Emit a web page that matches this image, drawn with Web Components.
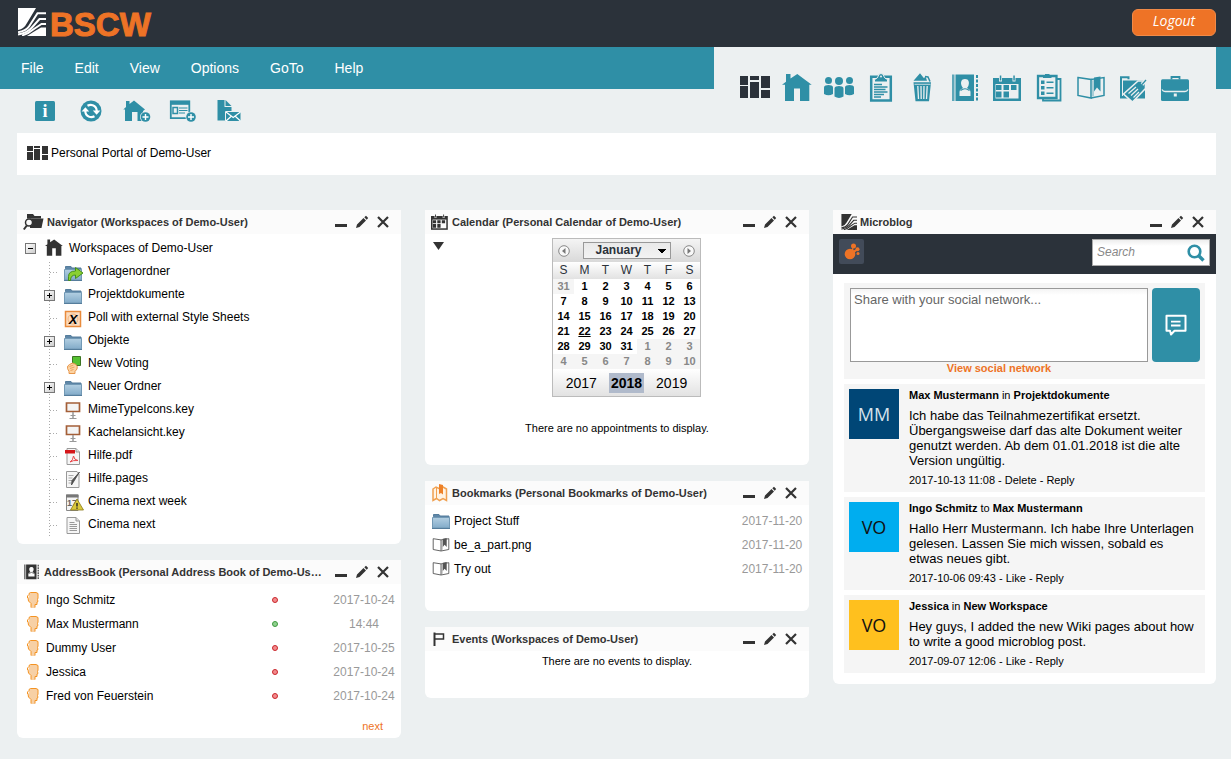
<!DOCTYPE html>
<html lang="en">
<head>
<meta charset="utf-8">
<meta name="viewport" content="width=device-width, initial-scale=1">
<title>BSCW - Personal Portal of Demo-User</title>
<style>
    :root{
        --dark: #2b323a;
        --teal: #2f8fa6;
        --orange: #ee7326;
        --page: #ecf0f1;
        --muted: #999999;
        --ink: #333333;
    }

    body{
        margin: 0;
        background: var(--page);
        color: #000000;
        font-family: "Liberation Sans", Arial, sans-serif;
        font-size: 12px;
        line-height: 15px;
    }
</style>
</head>
<body>

<app-header></app-header>
<main-nav></main-nav>
<path-bar>Personal Portal of Demo-User</path-bar>

<portal-grid>
    <portal-column>
        <portal-panel icon="navigator" heading="Navigator (Workspaces of Demo-User)">
            <nav-tree label="Workspaces of Demo-User">
                <tree-item icon="sharedfolder">Vorlagenordner</tree-item>
                <tree-item icon="folder" expandable>Projektdokumente</tree-item>
                <tree-item icon="poll">Poll with external Style Sheets</tree-item>
                <tree-item icon="folder" expandable>Objekte</tree-item>
                <tree-item icon="voting">New Voting</tree-item>
                <tree-item icon="folder" expandable>Neuer Ordner</tree-item>
                <tree-item icon="keynote">MimeTypeIcons.key</tree-item>
                <tree-item icon="keynote">Kachelansicht.key</tree-item>
                <tree-item icon="pdf">Hilfe.pdf</tree-item>
                <tree-item icon="pages">Hilfe.pages</tree-item>
                <tree-item icon="eventwarn">Cinema next week</tree-item>
                <tree-item icon="document">Cinema next</tree-item>
            </nav-tree>
        </portal-panel>
        <portal-panel icon="addressbook" heading="AddressBook (Personal Address Book of Demo-Us…">
            <contact-list></contact-list>
        </portal-panel>
    </portal-column>

    <portal-column>
        <portal-panel icon="calendarsmall" heading="Calendar (Personal Calendar of Demo-User)">
            <month-calendar></month-calendar>
            <empty-note class="appointments">There are no appointments to display.</empty-note>
        </portal-panel>
        <portal-panel icon="bookmarks" heading="Bookmarks (Personal Bookmarks of Demo-User)">
            <bookmark-list></bookmark-list>
        </portal-panel>
        <portal-panel icon="flag" heading="Events (Workspaces of Demo-User)">
            <empty-note class="events">There are no events to display.</empty-note>
        </portal-panel>
    </portal-column>

    <portal-column>
        <portal-panel icon="marksmall" heading="Microblog">
            <micro-blog>
                <blog-post initials="MM" color="#004676" ink="#d5e2ec" author="Max Mustermann" relation="in" target="Projektdokumente" date="2017-10-13 11:08" action="Delete">Ich habe das Teilnahmezertifikat ersetzt. Übergangsweise darf das alte Dokument weiter genutzt werden. Ab dem 01.01.2018 ist die alte Version ungültig.</blog-post>
                <blog-post initials="VO" color="#00adef" ink="#111111" author="Ingo Schmitz" relation="to" target="Max Mustermann" date="2017-10-06 09:43" action="Like">Hallo Herr Mustermann. Ich habe Ihre Unterlagen gelesen. Lassen Sie mich wissen, sobald es etwas neues gibt.</blog-post>
                <blog-post initials="VO" color="#ffc01e" ink="#111111" author="Jessica" relation="in" target="New Workspace" date="2017-09-07 12:06" action="Like">Hey guys, I added the new Wiki pages about how to write a good microblog post.</blog-post>
            </micro-blog>
        </portal-panel>
    </portal-column>
</portal-grid>

<script>
// ---------- icons: name -> [width, height, viewBox, svg content] ----------
const mark = `
    <path fill="currentColor" d="M0 0H18L9 15Q6 21 0 22z"/>
    <path fill="none" stroke="currentColor" stroke-width="2" d="M28 5.200H19.500L11 18.500Q8 23 0 24.300"/>
    <path fill="none" stroke="currentColor" stroke-width="2" d="M28 11H21.500L13.500 20Q9 25 0 26.600"/>
    <path fill="none" stroke="currentColor" stroke-width="1.800" d="M28 16H23.500L16 21Q10 26 4 27.500"/>
    <path fill="currentColor" d="M28 19.500H23L17 23 9 28H28z"/>`;

const plusBadge = (x, y) => `
    <circle cx="${x}" cy="${y}" r="5.5" fill="#ecf0f1"/>
    <circle cx="${x}" cy="${y}" r="4.8" fill="currentColor"/>
    <path d="M${x - 3} ${y}h6M${x} ${y - 3}v6" stroke="#fff" stroke-width="1.4"/>`;

const folder = `
    <defs><linearGradient id="f" x2="0" y2="1"><stop stop-color="#b3cfe2"/><stop offset="1" stop-color="#82abc9"/></linearGradient></defs>
    <path d="M1.500 3.500V1.500h5.500l1 1.500h9v2H1.500z" fill="#5f87a8" stroke="#557d9c"/>
    <path d="M.5 4.500h17v10.500H.5z" fill="url(#f)" stroke="#7299b5"/>
    <path d="M0 15.500h18" stroke="#557d9c"/>`;

const sheet = `
    <path d="M3 .5h9L15.500 4v12.500H3z" fill="#f6f6f6" stroke="#999"/>
    <path d="M12 .5V4h3.500" fill="#ddd" stroke="#999"/>`;

const calendarIcon = `
    <path d="M1 5h28v23H1z" fill="currentColor"/>
    <path d="M3.500 11h23v14.500h-23z" fill="var(--hole, #ecf0f1)"/>
    <path d="M7 3v5.500h3V3zM20.500 3v5.500h3V3z" fill="var(--hole, #ecf0f1)"/>
    <path d="M7.800 2.500h1.500v5H7.800zM21.300 2.500h1.500v5h-1.500z" fill="currentColor"/>
    <path d="M4 12h5.500v5H4zM11.500 12H17v5h-5.500zM19 12h5.500v5H19zM4 18.500h5.500v6H4zM11.500 18.500H17v6h-5.500z" fill="currentColor"/>`;

const bookIcon = `
    <path d="M2 4.500l13 2V25L2 22.500z" fill="none" stroke="currentColor" stroke-width="1.500"/>
    <path d="M15 6.500l13-2v18L15 25" fill="none" stroke="currentColor" stroke-width="1.500"/>
    <path d="M16 7.500l2-.5v16l-2 .5z" fill="currentColor" opacity=".35"/>
    <path d="M18 4.500l6.500-1v15l-3.500-4-3 4z" fill="currentColor"/>`;

const addressIcon = `
    <path d="M2 1.500h2.500V28H2z" fill="currentColor" opacity=".75"/>
    <path d="M5.500 1.500H24V28H5.500zM26 2h2v3h-2zM26 6.500h2v3h-2zM26 11h2v3h-2zM26 15.500h2v3h-2zM26 20h2v3h-2zM26 24.500h2v3h-2z" fill="currentColor"/>
    <path d="M15 6c-4 0-4.500 3.500-3.500 6.500.5 1.500 1.500 2.500 1.500 2.500-1.500 1-3.500 1.500-3.500 4v4h11v-4c0-2.500-2-3-3.500-4 0 0 1-1 1.500-2.500C19.500 9.500 19 6 15 6z" fill="var(--hole, #ecf0f1)"/>
    <path d="M10.500 17.500q4.500-3.500 9 0" fill="none" stroke="currentColor" stroke-width="1.200"/>`;

const housePath = `<path fill="currentColor" d="M4 1h4.500v4.500L15.300 1l14.400 10.700h-2.400V28H18V15.500h-6V28H3V11.700H0l4-3z"/>`;

const ICONS = {
    mark: [28, 28, "0 0 28 28", mark],
    marksmall: [18, 16, "-4 0 31 28", mark],
    portal: [30, 30, "0 0 30 30", `<path fill="currentColor" d="M0 3h8v9H0zM0 13h8v12H0zM10 3h9v4h-9zM10 9h9v16h-9zM21 3h9v12h-9zM21 17h9v8h-9z"/>`],
    portalsmall: [22, 22, "0 0 22 22", `<path fill="currentColor" d="M0 4h6v5H0zM0 10h6v8H0zM7 4h6v2H7zM7 7h6v11H7zM15 4h6v8h-6zM15 13h6v5h-6z"/>`],
    house: [30, 30, "0 0 30 30", housePath],
    housesmall: [18, 18, "0 0 30 30", housePath],
    people: [30, 30, "0 0 30 30", `<g fill="currentColor">
        <circle cx="4.500" cy="7.500" r="3.500"/><circle cx="25.500" cy="7.500" r="3.500"/><circle cx="15" cy="8" r="4"/>
        <path d="M1.500 12.500q3-.8 6 0 1.500.5 1.500 2V21q-4.500 2.500-9 0v-6.500q0-1.500 1.500-2zM22.500 12.500q3-.8 6 0 1.500.5 1.500 2V21q-4.500 2.500-9 0v-6.500q0-1.500 1.500-2zM12 13.500q3-.8 6 0 1.500.5 1.500 2v8q-4.500 2.800-9 0v-8q0-1.500 1.500-2z"/></g>`],
    clipboard: [30, 30, "0 0 30 30", `<path d="M5.200 3.800h19.600v23.700H5.200z" fill="none" stroke="currentColor" stroke-width="2.500"/>
        <path d="M8.500 9V6.500q3-1 3.500-3 .5-3 3-3t3 3q.5 2 3.500 3V9z" fill="currentColor" stroke="#ecf0f1"/>
        <circle cx="15" cy="3.500" r="1" fill="#ecf0f1"/>
        <path d="M8 11.500h8M8 14h13.500M8 16.500h11.500M8 19h13.500M8 21.500h10M8 24h7" stroke="currentColor" stroke-width="1.500"/>`],
    trash: [30, 30, "0 0 30 30", `<path fill="currentColor" d="M5.500 7.800L12 .3l4 5 1.500-2L19 7.800zM5.500 9.300H23l-2 19H7.500z"/>
        <path d="M17 3.500l3 .5 2 4.500" fill="none" stroke="currentColor" stroke-width="1.500"/>
        <path d="M6.500 11.300h16" stroke="#ecf0f1" stroke-width=".8"/>
        <path d="M9.800 13l.7 13M13 13l.2 13M16 13l-.2 13M19.200 13l-.7 13" stroke="#ecf0f1" stroke-width="1.300"/>`],
    addresses: [30, 30, "0 0 30 30", addressIcon],
    calendar: [30, 30, "0 0 30 30", calendarIcon],
    tasks: [30, 30, "0 0 30 30", `<path d="M23 6h3.500v21.500H9V26" fill="none" stroke="currentColor" stroke-width="1.800"/>
        <path d="M4 3h18.500v22H4z" fill="#ecf0f1" stroke="currentColor" stroke-width="2.300"/>
        <path d="M9 5V2.500h2V1h4.500v1.500h2V5z" fill="currentColor"/>
        <path d="M7 7.500h3.500V11H7zM7 13h3.500v3.500H7zM7 18.500h3.500V22H7zM12.500 8.500h7V10h-7zM12.500 14h7v1.500h-7zM12.500 19.500h7V21h-7z" fill="currentColor"/>`],
    book: [30, 30, "0 0 30 30", bookIcon],
    tagfolder: [30, 30, "0 0 30 30", `<path d="M3 24.500V4.300h7.500v2" fill="none" stroke="currentColor" stroke-width="2"/>
        <path d="M5 7.500h22v18H2V23h3z" fill="currentColor"/>
        <path d="M5.500 21L20 8h7.500v7.500L14.500 29z" fill="currentColor" stroke="#ecf0f1" stroke-width="1.600"/>
        <path d="M24 11.500l4.500-5" stroke="#ecf0f1" stroke-width="3.500"/><path d="M24 11.500L28 7" stroke="currentColor" stroke-width="1.300"/>
        <path d="M10.500 20.500l7.500-6.500M13 22.500l7-6.500M15.500 24.500l5.500-5.500" stroke="#ecf0f1" stroke-width="1.200"/>`],
    briefcase: [30, 30, "0 0 30 30", `<path d="M11.500 6.500V4h8v2.500" fill="none" stroke="currentColor" stroke-width="1.800"/>
        <rect x="1" y="6.300" width="28" height="21.700" rx="1.500" fill="currentColor"/>
        <path d="M2 16.500q1 2 3 2h20q2 0 3-2" fill="none" stroke="#ecf0f1" stroke-width="1.300"/>
        <rect x="13.800" y="20.500" width="3" height="3" fill="#ecf0f1"/>`],

    info: [28, 22, "0 0 28 22", `<rect x="4" y="1" width="20" height="20" rx="1.500" fill="currentColor"/>
        <text x="14" y="17" text-anchor="middle" font-family="Liberation Serif, serif" font-weight="bold" font-size="18" fill="#fff">i</text>`],
    refresh: [28, 22, "0 0 28 22", `<circle cx="14" cy="11" r="10.500" fill="currentColor"/>
        <path d="M10.500 5.800Q13 4.500 15.700 5.200 19.700 6.500 19.700 11M17.500 16.200Q15 17.500 12.300 16.800 8.300 15.500 8.300 11" fill="none" stroke="#fff" stroke-width="2.200"/>
        <path d="M15.800 10.500h7.600l-3.800 4.300zM4.600 11.500h7.600L8.400 7.200z" fill="#fff"/>`],
    houseadd: [28, 22, "0 0 28 22", `<path fill="currentColor" d="M3 1h3.500v3L11 .5l11 9-2 1.500v10h-5.500v-9H9v9H2V9.500H.3L3 7z"/>${plusBadge(22.5, 17)}`],
    cardadd: [28, 22, "0 0 28 22", `<path d="M1.800 1.500h18.500v16.700H1.800z" fill="none" stroke="currentColor" stroke-width="1.800"/>
        <path d="M1 .8h20v4H1z" fill="currentColor"/>
        <path d="M4 7.500h4.500v6H4z" fill="none" stroke="currentColor" stroke-width="1.500"/>
        <path d="M10 8h8.500M10 10.500h8.500M10 13h6" stroke="currentColor" stroke-width="1.200"/>${plusBadge(22, 17)}`],
    filemail: [28, 22, "0 0 28 22", `<path d="M2.500 0h7v7h7v4H11v9.500H2.500z" fill="currentColor"/>
        <path d="M10.500 0l6 6h-6z" fill="currentColor"/>
        <path d="M10.500 11.500h15.500V21.500H10.500z" fill="currentColor" stroke="#ecf0f1"/>
        <path d="M11 12l7.200 5.500L25.500 12M11 21l5-4.500M25.500 21l-5-4.500" fill="none" stroke="#fff" stroke-width="1.200"/>`],

    navigator: [21, 18, "0 0 21 18", `<path d="M4 1h6l1.500 2H18v2.500H4z" fill="currentColor"/>
        <path d="M7 5.500h13.500l-2 9.500H7z" fill="currentColor"/>
        <circle cx="6" cy="9.500" r="3.500" fill="#fbfbfb" stroke="currentColor" stroke-width="1.500"/>
        <path d="M3.800 12.500l-3 4" stroke="currentColor" stroke-width="2"/>`],
    addressbook: [18, 18, "1 -1 30 32", addressIcon],
    calendarsmall: [18, 18, "2 0 28 30", calendarIcon],
    bookmarks: [18, 18, "1 0 18 18", `<path d="M3 5l3-2 4 2 3-2 3.500 2v11.500L13 14.500l-3.500 2-3-2L3 16.500z" fill="#fff3e4" stroke="#f0a050" stroke-width="1.500"/>
        <path d="M6.500 4v10" stroke="#f0a050"/><path d="M9 0l4 1v9.500L11 9l-2 1z" fill="#ee8128"/>`],
    flag: [18, 18, "0 0 18 18", `<path d="M3.500 2.500V16" stroke="currentColor" stroke-width="2"/><path d="M4 4h8.500v5H4" fill="none" stroke="currentColor" stroke-width="1.500"/>`],
    minimize: [14, 14, "0 0 14 14", `<path d="M1 9h12v3H1z" fill="currentColor"/>`],
    edit: [14, 14, "0 0 14 14", `<path d="M1 13l1-3.500L8.500 3 11 5.500 4.500 12zM9.300 2.200L11 .8 13.200 3l-1.500 1.700z" fill="currentColor"/>`],
    close: [14, 14, "0 0 14 14", `<path d="M2 2l10 10M12 2L2 12" stroke="currentColor" stroke-width="2.200"/>`],

    folder: [18, 16, "0 0 18 16", folder],
    sharedfolder: [20, 16, "0 0 20 16", `${folder}<path d="M4.500 15.500V11.500q0-5.500 7-5.500V2.500L19 8l-7.500 5.500v-3.500q-5 0-5 5.500z" fill="#8ad032" stroke="#3e8a12" stroke-width=".9"/>`],
    poll: [18, 18, "0 0 18 18", `<path d="M1.500 1.500h15v15h-15z" fill="#fbdcc0" stroke="#e98b3c" stroke-width="1.500"/>
        <circle cx="9" cy="9" r="5" fill="none" stroke="#f2b47e"/>
        <text x="9" y="14" text-anchor="middle" font-family="Liberation Sans, sans-serif" font-weight="bold" font-style="italic" font-size="13" fill="#000">X</text>`],
    voting: [18, 18, "0 0 18 18", `<path d="M8.500 .5h8v9h-8z" fill="#55c131" stroke="#3c7423"/>
        <path d="M5 17.500v-2l-1.500-3q-.5-3 2-4l3-1.500L12 8.500q2 2 1 4.500l-2 2.500v2z" fill="#fcd3a2" stroke="#e7964c"/>
        <path d="M5.500 10.500l4-1.500M6 12.500l4.500-1.500M6.500 14.500l3-1" stroke="#e7964c" stroke-width=".8"/>`],
    keynote: [18, 18, "0 0 18 18", `<path d="M2.500 1h13v8.500h-13z" fill="#f4f4f4" stroke="#a45f38" stroke-width="1.700"/>
        <path d="M9 10v6" stroke="#999" stroke-width="1.500"/><path d="M6.500 13.500h5M5.500 16.500h7" stroke="#999"/>`],
    pdf: [18, 18, "0 0 18 18", `${sheet}<path d="M1 2h10v3.500H1z" fill="#d5161a"/>
        <path d="M6 14q3-1.500 3.500-6 .5 4 4.500 4.500-5-.5-8 1.500z" fill="none" stroke="#e8484b"/>`],
    pages: [18, 18, "0 0 18 18", `<path d="M2.500 .5H13L15 3v13.500H2.500z" fill="#f6f6f6" stroke="#999"/>
        <path d="M4.500 4.500h5M4.500 7h4M4.500 9.500h4M4.500 12h3" stroke="#aaa"/>
        <path d="M15.500 1L10 10l-2.500 4 .5-4.500z" fill="#555" stroke="#444" stroke-width=".8"/>`],
    eventwarn: [20, 18, "0 0 20 18", `<path d="M2.500 1H14v15.500H2.500z" fill="#f4f4f4" stroke="#888"/><path d="M2 .5h12.500v3H2z" fill="#777"/>
        <text x="3" y="12" font-family="Liberation Sans, sans-serif" font-weight="bold" font-size="9" fill="#666">17</text>
        <path d="M13 5l6.500 11h-13z" fill="#d9c93b" stroke="#8a7a1d" stroke-width=".8"/><path d="M13 9v3.500M13 13.500v1.300" stroke="#222" stroke-width="1.400"/>`],
    document: [18, 18, "0 0 18 18", `${sheet}<path d="M5.500 5.500h5M5.500 7.500H13M5.500 9.500H13M5.500 11.500H13M5.500 13.500H13" stroke="#999"/>`],
    head: [12, 16, "0 0 12 16", `<path d="M2 1.500L3.500 .5H9l2 1V6l-.5 2 .5 1.500-1 1v2.500H8v3H4v-4.500L1.500 9z" fill="#f7d0a5"/>
        <path d="M.5 6V4L2 2.500V1.500L3.500 .5H9l2 1V6l-.5 1.500.5 2-1 .5v2.500H8v3M1 5.500L1.500 9 4 11.500v4" fill="none" stroke="#f49322"/>`],
    booksmall: [18, 16, "0 2 30 26", bookIcon],
    arrowdown: [11, 8, "0 0 11 8", `<path d="M0 0h11L5.500 8z" fill="currentColor"/>`],
    previous: [12, 12, "0 0 12 12", `<circle cx="6" cy="6" r="5.300" fill="#f8f8f8" stroke="#888"/><path d="M7.500 3v6L4 6z" fill="#777"/>`],
    next: [12, 12, "0 0 12 12", `<circle cx="6" cy="6" r="5.300" fill="#f8f8f8" stroke="#888"/><path d="M4.500 3v6L8 6z" fill="#777"/>`],
    bubbles: [18, 18, "0 0 18 18", `<g fill="currentColor"><circle cx="7" cy="11" r="5.300"/><circle cx="10.500" cy="3" r="2.500"/><circle cx="14.500" cy="6.300" r="2"/><circle cx="15" cy="10.500" r="1.500"/><path d="M9 8l5-2 1 1-4 3zM10 2.500L8.500 8h2z"/></g>`],
    search: [18, 18, "0 0 18 18", `<circle cx="7.500" cy="7.500" r="5.800" fill="none" stroke="currentColor" stroke-width="2.600"/><path d="M11.500 11.500l5 5" stroke="currentColor" stroke-width="3.300"/>`],
    speech: [22, 22, "0 0 22 22", `<path d="M1.500 1.800h19v15h-11L6 20.500l-1-3.700H1.500z" fill="none" stroke="currentColor" stroke-width="2" stroke-linejoin="round"/><path d="M6 7.700h9.500M6 11.500h9.500" stroke="currentColor" stroke-width="1.800"/>`],
};

class UiIcon extends HTMLElement{
    constructor(){
        super();
        this.attachShadow({ mode: "open" });
    }

    connectedCallback() {
        const [width, height, box, content] = ICONS[this.getAttribute("name")];

        this.shadowRoot.innerHTML = `
        <style>
            :host{ display: block; flex: none; }
            svg{ display: block; }
        </style>
        <svg width="${width}" height="${height}" viewBox="${box}" aria-hidden="true">${content}</svg>
        `;
    }
}

class AppHeader extends HTMLElement{
    constructor(){
        super();
        this.attachShadow({ mode: "open" });
    }

    connectedCallback() {
        this.shadowRoot.innerHTML = `
        <style>
            :host{ display: block; background: var(--dark); }

            header{
                height: 47px;
                padding: 0 15px 0 18px;
                display: flex;
                align-items: center;
                justify-content: space-between;
            }

            .logo{
                display: flex;
                align-items: center;
                gap: 4px;
                padding-bottom: 3px;
                color: #ffffff;
                text-decoration: none;
            }

            .logo span{
                padding-top: 4px;
                color: var(--orange);
                font-size: 33px;
                font-weight: bold;
                line-height: 33px;
                -webkit-text-stroke: 1px var(--orange);
            }

            .logout{
                width: 84px;
                height: 27px;
                margin-bottom: 3px;
                padding: 0 0 3px;
                border: 1px solid #f08a48;
                border-radius: 6px;
                background: var(--orange);
                color: #ffffff;
                font: italic 14px/18px "Open Sans", "Noto Sans", sans-serif;
            }
        </style>
        <header>
            <a class="logo" href="#"><ui-icon name="mark"></ui-icon><span>BSCW</span></a>
            <button class="logout" type="button">Logout</button>
        </header>
        `;
    }
}

class MainNav extends HTMLElement{
    constructor(){
        super();
        this.attachShadow({ mode: "open" });
    }

    connectedCallback() {
        const menus = ["File", "Edit", "View", "Options", "GoTo", "Help"];
        const tools = { info: "Information", refresh: "Reload", houseadd: "New workspace", cardadd: "New contact", filemail: "Send document" };
        const places = {
            portal: "Portal", house: "Home", people: "Communities", clipboard: "Clipboard", trash: "Trash", addresses: "Address book",
            calendar: "Calendar", tasks: "Tasks", book: "Bookmarks", tagfolder: "Tags", briefcase: "Briefcase"
        };

        this.shadowRoot.innerHTML = `
        <style>
            :host{
                display: grid;
                grid-template-columns: 1fr auto 15px;
                grid-template-rows: 42px 44px;
                color: var(--teal);
            }

            .menus, .edge{ background: var(--teal); }

            .menus{
                display: flex;
                align-items: center;
                gap: 31px;
                padding-left: 21px;
            }

            .tools{
                grid-row: 2;
                display: flex;
                align-items: center;
                padding-left: 22px;
            }

            .places{
                grid-area: 1 / 2 / 3 / 3;
                display: flex;
                align-items: center;
                padding: 0 20px 4px;
            }

            button{
                padding: 0;
                border: 0;
                background: none;
                color: #ffffff;
                font: inherit;
                font-size: 14px;
                line-height: 18px;
            }

            .tools button{
                width: 46px;
                display: flex;
                justify-content: center;
                color: var(--teal);
            }

            .places a{
                width: 42px;
                display: flex;
                justify-content: center;
                color: var(--teal);
            }

            .places a:first-child{ color: var(--dark); }
        </style>
        <nav class="menus" aria-label="Menu">
            ${menus.map(menu => `<button type="button">${menu}</button>`).join("")}
        </nav>
        <nav class="places" aria-label="Places">
            ${Object.entries(places).map(([icon, label]) => `<a href="#" aria-label="${label}"><ui-icon name="${icon}"></ui-icon></a>`).join("")}
        </nav>
        <div class="edge"></div>
        <div class="tools" role="toolbar" aria-label="Actions">
            ${Object.entries(tools).map(([icon, label]) => `<button type="button" aria-label="${label}"><ui-icon name="${icon}"></ui-icon></button>`).join("")}
        </div>
        `;
    }
}

class PathBar extends HTMLElement{
    constructor(){
        super();
        this.attachShadow({ mode: "open" });
    }

    connectedCallback() {
        this.shadowRoot.innerHTML = `
        <style>
            :host{
                display: flex;
                align-items: center;
                gap: 2px;
                min-height: 40px;
                margin: 0 15px 0 17px;
                padding: 0 10px 2px;
                background: #ffffff;
            }

            ui-icon{ color: var(--ink); }
            h1{ margin: 0; font-size: inherit; font-weight: normal; }
        </style>
        <ui-icon name="portalsmall"></ui-icon>
        <h1><slot></slot></h1>
        `;
    }
}

class PortalGrid extends HTMLElement{
    constructor(){
        super();
        this.attachShadow({ mode: "open" });
    }

    connectedCallback() {
        this.shadowRoot.innerHTML = `
        <style>
            :host{
                display: grid;
                grid-template-columns: minmax(0, 384fr) minmax(0, 384fr) minmax(0, 383fr);
                align-items: start;
                gap: 24px;
                padding: 35px 15px 21px 17px;
            }
        </style>
        <slot></slot>
        `;
    }
}

class PortalColumn extends HTMLElement{
    constructor(){
        super();
        this.attachShadow({ mode: "open" });
    }

    connectedCallback() {
        this.shadowRoot.innerHTML = `
        <style>
            :host{ display: flex; flex-direction: column; gap: 16px; }
        </style>
        <slot></slot>
        `;
    }
}

class PortalPanel extends HTMLElement{
    constructor(){
        super();
        this.attachShadow({ mode: "open" });
    }

    connectedCallback() {
        const heading = this.getAttribute("heading");
        const icon = this.getAttribute("icon");

        this.shadowRoot.innerHTML = `
        <style>
            :host{
                display: block;
                background: #ffffff;
                border-radius: 0 0 6px 6px;
                --hole: #fbfbfb;
            }

            header{
                display: flex;
                align-items: center;
                gap: 3px;
                height: 24px;
                padding: 0 11px 0 6px;
                background: #fbfbfb;
                color: var(--ink);
            }

            h2{
                flex: 1;
                min-width: 0;
                margin: 0;
                font-size: 11px;
                line-height: 15px;
                white-space: nowrap;
            }

            .actions{ display: flex; gap: 7px; }

            button{
                padding: 0;
                border: 0;
                background: none;
                color: inherit;
            }
        </style>
        <section>
            <header>
                <ui-icon name="${icon}"></ui-icon>
                <h2>${heading}</h2>
                <div class="actions">
                    <button type="button" aria-label="Minimize"><ui-icon name="minimize"></ui-icon></button>
                    <button type="button" aria-label="Edit"><ui-icon name="edit"></ui-icon></button>
                    <button type="button" aria-label="Close"><ui-icon name="close"></ui-icon></button>
                </div>
            </header>
            <slot></slot>
        </section>
        `;
    }
}

const toggleStyle = `
    .toggle{
        box-sizing: border-box;
        width: 11px;
        height: 11px;
        padding: 0;
        border: 1px solid #777777;
        background:
            linear-gradient(#000000, #000000) center / 5px 1px no-repeat,
            linear-gradient(#000000, #000000) center / 1px var(--upright, 5px) no-repeat,
            linear-gradient(135deg, #ffffff, #cccccc);
    }`;

class NavTree extends HTMLElement{
    constructor(){
        super();
        this.attachShadow({ mode: "open" });
    }

    connectedCallback() {
        this.shadowRoot.innerHTML = `
        <style>
            :host{ display: block; padding: 2px 8px 8px; }

            .root{
                display: flex;
                align-items: center;
                height: 24px;
                --upright: 0px;
            }

            .root ui-icon{ margin: 0 6px 0 9px; color: var(--ink); }
            a{ color: inherit; text-decoration: none; }

            .items{
                margin-left: 24px;
                background: repeating-linear-gradient(#aaaaaa 0 1px, transparent 1px 3px) 0 2px / 1px 100% no-repeat;
            }
            ${toggleStyle}
        </style>
        <div role="tree">
            <div class="root">
                <button class="toggle" type="button" aria-label="Collapse"></button>
                <ui-icon name="housesmall"></ui-icon>
                <a href="#">${this.getAttribute("label")}</a>
            </div>
            <div class="items" role="group"><slot></slot></div>
        </div>
        `;
    }
}

class TreeItem extends HTMLElement{
    constructor(){
        super();
        this.attachShadow({ mode: "open" });
    }

    connectedCallback() {
        const lead = this.hasAttribute("expandable")
            ? `<button class="toggle" type="button" aria-label="Expand"></button>`
            : `<i></i>`;

        this.shadowRoot.innerHTML = `
        <style>
            :host{
                display: grid;
                grid-template-columns: 15px 19px auto;
                justify-content: start;
                align-items: center;
                column-gap: 5px;
                height: 23px;
                margin-left: -5px;
            }

            .toggle, i, ui-icon{ margin-top: 2px; }

            i{
                justify-self: end;
                width: 9px;
                height: 1px;
                background: repeating-linear-gradient(90deg, #aaaaaa 0 1px, transparent 1px 3px);
            }

            a{ color: inherit; text-decoration: none; }
            ${toggleStyle}
        </style>
        ${lead}
        <ui-icon name="${this.getAttribute("icon")}"></ui-icon>
        <a href="#"><slot></slot></a>
        `;
    }
}

// rows shared by the contact and bookmark lists
const listStyle = `
    :host{ display: block; padding: 4px 6px 0; }
    table{ width: 100%; border-collapse: collapse; }
    td{ height: 24px; padding: 0; }
    td:last-child{ width: 62px; color: var(--muted); text-align: center; white-space: nowrap; }
    .entry{ display: flex; align-items: center; gap: 4px; color: inherit; text-decoration: none; }
`;

class ContactList extends HTMLElement{
    constructor(){
        super();
        this.attachShadow({ mode: "open" });
    }

    connectedCallback() {
        const contacts = [
            ["Ingo Schmitz", "offline", "2017-10-24"],
            ["Max Mustermann", "online", "14:44"],
            ["Dummy User", "offline", "2017-10-25"],
            ["Jessica", "offline", "2017-10-24"],
            ["Fred von Feuerstein", "offline", "2017-10-24"],
        ];

        this.shadowRoot.innerHTML = `
        <style>
            ${listStyle}
            .entry{ gap: 7px; padding-left: 4px; }
            .state{ width: 61px; }

            .state span{
                display: block;
                box-sizing: border-box;
                width: 6px;
                height: 6px;
                border: 1px solid #c9272c;
                border-radius: 50%;
                background: #f28a8c;
            }

            .state .online{ border-color: #3f9a3f; background: #8fd08f; }

            footer{
                padding: 11px 12px 4px 0;
                font-size: 11px;
                line-height: 15px;
                text-align: right;
            }

            footer a{ color: var(--orange); text-decoration: none; }
        </style>
        <table>
            ${contacts.map(([name, state, date]) => `
            <tr>
                <td><a class="entry" href="#"><ui-icon name="head"></ui-icon>${name}</a></td>
                <td class="state"><span class="${state}" role="img" aria-label="${state}"></span></td>
                <td>${date}</td>
            </tr>`).join("")}
        </table>
        <footer><a href="#">next</a></footer>
        `;
    }
}

class BookmarkList extends HTMLElement{
    constructor(){
        super();
        this.attachShadow({ mode: "open" });
    }

    connectedCallback() {
        const bookmarks = [["folder", "Project Stuff"], ["booksmall", "be_a_part.png"], ["booksmall", "Try out"]];

        this.shadowRoot.innerHTML = `
        <style>
            ${listStyle}
            :host{ padding-bottom: 30px; }
            .entry{ padding-left: 1px; }
            ui-icon{ color: #555555; }
        </style>
        <table>
            ${bookmarks.map(([icon, name]) => `
            <tr>
                <td><a class="entry" href="#"><ui-icon name="${icon}"></ui-icon>${name}</a></td>
                <td>2017-11-20</td>
            </tr>`).join("")}
        </table>
        `;
    }
}

class EmptyNote extends HTMLElement{
    constructor(){
        super();
        this.attachShadow({ mode: "open" });
    }

    connectedCallback() {
        this.shadowRoot.innerHTML = `
        <style>
            :host{ display: block; text-align: center; font-size: 11px; line-height: 15px; }
            :host(.appointments){ padding: 24px 0 29px; }
            :host(.events){ padding: 3px 0 29px; }
        </style>
        <slot></slot>
        `;
    }
}

class MonthCalendar extends HTMLElement{
    constructor(){
        super();
        this.attachShadow({ mode: "open" });
    }

    connectedCallback() {
        const months = ["January", "February", "March", "April", "May", "June", "July", "August", "September", "October", "November", "December"];
        const start = new Date(2017, 11, 31);
        let rows = "";
        for (let week = 0; week < 6; week++) {
            rows += "<tr>";
            for (let day = 0; day < 7; day++) {
                const date = new Date(start.getFullYear(), start.getMonth(), start.getDate() + week * 7 + day);
                const inMonth = date.getMonth() === 0;
                const today = inMonth && date.getDate() === 22;
                rows += `<td class="${inMonth ? "" : "other"}${today ? "today" : ""}">${date.getDate()}</td>`;
            }
            rows += "</tr>";
        }

        this.shadowRoot.innerHTML = `
        <style>
            :host{
                display: grid;
                grid-template-columns: 11px 1fr;
                padding: 4px 0 0 8px;
            }

            .expand{
                align-self: start;
                padding: 4px 0;
                border: 0;
                background: none;
                color: var(--ink);
            }

            .calendar{
                justify-self: center;
                box-sizing: border-box;
                width: 149px;
                border: 1px solid #bbbbbb;
            }

            .month{
                display: flex;
                align-items: center;
                justify-content: space-between;
                height: 23px;
                padding: 0 5px;
                background: linear-gradient(#f4f4f4, #d9d9d9);
            }

            .month button{ padding: 0; border: 0; background: none; }

            select{
                appearance: none;
                width: 88px;
                height: 17px;
                padding: 0 16px 0 0;
                border: 1px solid #999999;
                border-radius: 0;
                background:
                    conic-gradient(from -45deg at 50% 100%, #000000 90deg, transparent 0) right 4px center / 8px 4px no-repeat,
                    linear-gradient(#e9e9e9, #f3f3f3);
                color: var(--dark);
                font: bold 12px/15px "Liberation Sans", Arial, sans-serif;
                text-align: center;
                text-align-last: center;
            }

            table{ width: 100%; border-collapse: collapse; table-layout: fixed; text-align: center; }
            thead{ background: linear-gradient(#ffffff, #e2e2e2); }
            th{ height: 17px; padding: 0; color: var(--dark); font-size: 12px; font-weight: normal; line-height: 15px; }
            td{ height: 15px; padding: 0; font-size: 11px; font-weight: bold; line-height: 15px; }
            .other{ background: #f5f5f5; color: #888888; }
            .today{ text-decoration: underline; }

            .years{
                display: flex;
                align-items: center;
                justify-content: center;
                gap: 12px;
                height: 27px;
                background: linear-gradient(#ffffff, #e2e2e2);
            }

            .years button{
                height: 20px;
                padding: 0;
                border: 0;
                background: none;
                font: 14px/18px "Liberation Sans", Arial, sans-serif;
            }

            .years .current{ padding: 0 2px; background: #b0bacb; font-weight: bold; }
        </style>
        <button class="expand" type="button" aria-label="Collapse"><ui-icon name="arrowdown"></ui-icon></button>
        <div class="calendar">
            <div class="month">
                <button type="button" aria-label="Previous month"><ui-icon name="previous"></ui-icon></button>
                <select aria-label="Month">${months.map(month => `<option>${month}</option>`).join("")}</select>
                <button type="button" aria-label="Next month"><ui-icon name="next"></ui-icon></button>
            </div>
            <table>
                <thead><tr>${[..."SMTWTFS"].map(day => `<th>${day}</th>`).join("")}</tr></thead>
                <tbody>${rows}</tbody>
            </table>
            <div class="years">
                <button type="button">2017</button>
                <button class="current" type="button">2018</button>
                <button type="button">2019</button>
            </div>
        </div>
        `;
    }
}

class MicroBlog extends HTMLElement{
    constructor(){
        super();
        this.attachShadow({ mode: "open" });
    }

    connectedCallback() {
        this.shadowRoot.innerHTML = `
        <style>
            :host{ display: block; }

            .bar{
                display: flex;
                justify-content: space-between;
                align-items: flex-start;
                height: 35px;
                padding: 5px 6px 0;
                background: var(--dark);
            }

            button{ padding: 0; border: 0; display: flex; align-items: center; justify-content: center; }

            .brand{
                width: 25px;
                height: 25px;
                border-radius: 2px;
                background: #424b59;
                color: var(--orange);
            }

            .search{
                box-sizing: border-box;
                display: flex;
                align-items: center;
                width: 118px;
                height: 27px;
                padding-right: 4px;
                border: 1px solid #aaaaaa;
                background: linear-gradient(#eeeeee, #ffffff 6px);
            }

            .search button{ background: none; color: var(--teal); }

            input{
                flex: 1;
                min-width: 0;
                padding: 0 0 0 4px;
                border: 0;
                background: none;
                font: italic 12px/15px "Liberation Sans", Arial, sans-serif;
            }

            input::placeholder{ color: #888888; }

            .content{
                display: flex;
                flex-direction: column;
                gap: 5px;
                padding: 9px 11px 11px;
            }

            .share{
                display: grid;
                grid-template-columns: 1fr 48px;
                column-gap: 4px;
                padding: 5px 5px 5px 6px;
                background: #f5f5f5;
            }

            textarea{
                box-sizing: border-box;
                display: block;
                width: 100%;
                height: 74px;
                padding: 3px;
                border: 1px solid #999999;
                resize: none;
                background: linear-gradient(#f4f4f4, #ffffff 6px);
                font: 13px/15px "Liberation Sans", Arial, sans-serif;
            }

            textarea::placeholder{ color: #666666; }
            .send{ border-radius: 4px; background: var(--teal); color: #ffffff; }

            .network{
                justify-self: center;
                color: var(--orange);
                font-size: 11px;
                font-weight: bold;
                line-height: 12px;
                text-decoration: none;
            }
        </style>
        <div class="bar">
            <button class="brand" type="button" aria-label="Microblog"><ui-icon name="bubbles"></ui-icon></button>
            <div class="search">
                <input type="text" placeholder="Search" aria-label="Search">
                <button type="button" aria-label="Start search"><ui-icon name="search"></ui-icon></button>
            </div>
        </div>
        <div class="content">
            <div class="share">
                <textarea placeholder="Share with your social network..." aria-label="Message"></textarea>
                <button class="send" type="button" aria-label="Share"><ui-icon name="speech"></ui-icon></button>
                <a class="network" href="#">View social network</a>
            </div>
            <slot></slot>
        </div>
        `;
    }
}

class BlogPost extends HTMLElement{
    constructor(){
        super();
        this.attachShadow({ mode: "open" });
    }

    connectedCallback() {
        const get = name => this.getAttribute(name);

        this.shadowRoot.innerHTML = `
        <style>
            :host{ display: block; background: #f5f5f5; }

            article{
                display: grid;
                grid-template-columns: 50px 1fr;
                gap: 10px;
                padding: 5px;
            }

            .avatar{
                display: flex;
                align-items: center;
                justify-content: center;
                width: 50px;
                height: 50px;
                background: ${get("color")};
                color: ${get("ink")};
                font: 18px/24px "Open Sans", sans-serif;
            }

            h3{ margin: 0 0 6px; font-size: 11px; font-weight: normal; line-height: 13px; }
            p{ margin: 0 0 5px; font-size: 13px; line-height: 15px; }
            footer{ font-size: 11px; line-height: 14px; }
            a{ color: inherit; text-decoration: none; }
        </style>
        <article>
            <div class="avatar">${get("initials")}</div>
            <div>
                <h3><b>${get("author")}</b> ${get("relation")} <b>${get("target")}</b></h3>
                <p><slot></slot></p>
                <footer>${get("date")} - <a href="#">${get("action")}</a> - <a href="#">Reply</a></footer>
            </div>
        </article>
        `;
    }
}

customElements.define("ui-icon", UiIcon);
customElements.define("app-header", AppHeader);
customElements.define("main-nav", MainNav);
customElements.define("path-bar", PathBar);
customElements.define("portal-grid", PortalGrid);
customElements.define("portal-column", PortalColumn);
customElements.define("portal-panel", PortalPanel);
customElements.define("nav-tree", NavTree);
customElements.define("tree-item", TreeItem);
customElements.define("contact-list", ContactList);
customElements.define("bookmark-list", BookmarkList);
customElements.define("empty-note", EmptyNote);
customElements.define("month-calendar", MonthCalendar);
customElements.define("micro-blog", MicroBlog);
customElements.define("blog-post", BlogPost);
</script>
</body>
</html>
